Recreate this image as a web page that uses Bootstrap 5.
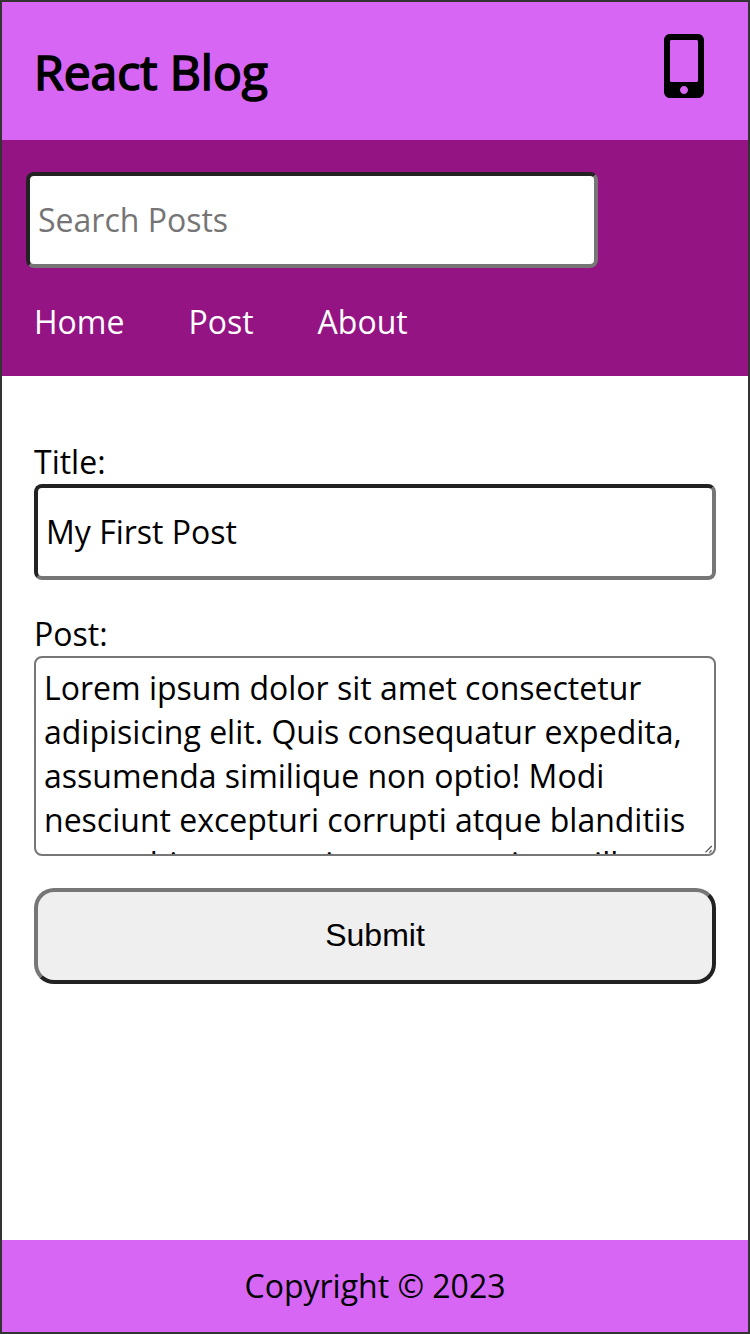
<!DOCTYPE html>
<html lang="en">
<head>
<meta charset="utf-8">
<meta name="viewport" content="width=device-width, initial-scale=1">
<title>React Blog</title>
<link href="https://cdn.jsdelivr.net/npm/bootstrap@5.3.0/dist/css/bootstrap.min.css" rel="stylesheet">
<style>
body{font:32px/44px "Open Sans",sans-serif;color:#000;background:#fff}
.app-shell{height:1334px;border:2px solid #333}
.bar-pink{background:#d766f5}
.site-header{height:138px;padding:0 44px 0 32px}
.site-title{font-size:48px;font-weight:400;line-height:66px;-webkit-text-stroke:1.7px #000;padding-top:2px}
.phone-icon{margin-top:32px}
.site-nav{height:236px;background:#931482;padding:32px 24px 0}
.field{font:inherit;color:#000;background:#fff;border:4px solid;border-color:#222 #767676 #767676 #222;border-radius:8px;height:96px;padding:0 8px 1px;outline:0}
.field::placeholder{color:#757575;opacity:1}
.search-field{width:572px}
.nav-row{margin-top:32px;padding-left:8px;gap:64px}
.post-form{padding:64px 32px 0}
.area{display:block;font:inherit;color:#000;border:2px solid #767676;border-radius:8px;height:200px;padding:8px;resize:none;overflow:hidden;outline:0}
.grip{right:3px;bottom:3px}
.submit-btn{height:96px;margin-top:32px;padding:0 0 2px;font:32px "Liberation Sans",Arial,sans-serif;color:#000;background:#efefef;border:4px solid;border-color:#767676 #222 #222 #767676;border-radius:20px}
.site-footer{height:92px}
</style>
</head>
<body>
<div class="app-shell d-flex flex-column">
<header class="site-header bar-pink d-flex justify-content-between">
<h1 class="site-title m-0 align-self-center">React Blog</h1>
<svg class="phone-icon" width="40" height="64" viewBox="0 0 320 512" aria-hidden="true"><path fill-rule="evenodd" d="M272 0H48C21.500 0 0 21.500 0 48v416c0 26.500 21.500 48 48 48h224c26.500 0 48-21.500 48-48V48c0-26.500-21.500-48-48-48zM160 480c-17.700 0-32-14.300-32-32s14.300-32 32-32 32 14.300 32 32-14.300 32-32 32zm112-108c0 6.600-5.400 12-12 12H60c-6.600 0-12-5.400-12-12V60c0-6.600 5.400-12 12-12h200c6.600 0 12 5.400 12 12v312z"/></svg>
</header>
<nav class="site-nav">
<input class="field search-field d-block" type="text" placeholder="Search Posts" aria-label="Search Posts">
<ul class="nav-row list-unstyled d-flex mb-0">
<li><a class="text-white text-decoration-none" href="#">Home</a></li>
<li><a class="text-white text-decoration-none" href="#">Post</a></li>
<li><a class="text-white text-decoration-none" href="#">About</a></li>
</ul>
</nav>
<main class="flex-grow-1">
<form class="post-form">
<label class="d-block" for="postTitle">Title:</label>
<input class="field w-100 d-block mb-4" id="postTitle" type="text" value="My First Post">
<label class="d-block pt-2" for="postBody">Post:</label>
<div class="position-relative">
<textarea class="area w-100" id="postBody" spellcheck="false">Lorem ipsum dolor sit amet consectetur adipisicing elit. Quis consequatur expedita, assumenda similique non optio! Modi nesciunt excepturi corrupti atque blanditiis quo nobis nemo minus eum qui quo illum</textarea>
<svg class="grip position-absolute" width="8" height="8" viewBox="0 0 8 8" aria-hidden="true"><path d="M.4 7.400L6.800 1M4.400 7.600L6.600 5.400" stroke="#555" stroke-width="1.300" fill="none"/></svg>
</div>
<button class="submit-btn w-100 d-block" type="button">Submit</button>
</form>
</main>
<footer class="site-footer bar-pink d-flex align-items-center justify-content-center"><p class="m-0">Copyright © 2023</p></footer>
</div>
<script src="https://cdn.jsdelivr.net/npm/bootstrap@5.3.0/dist/js/bootstrap.bundle.min.js"></script>
</body>
</html>
